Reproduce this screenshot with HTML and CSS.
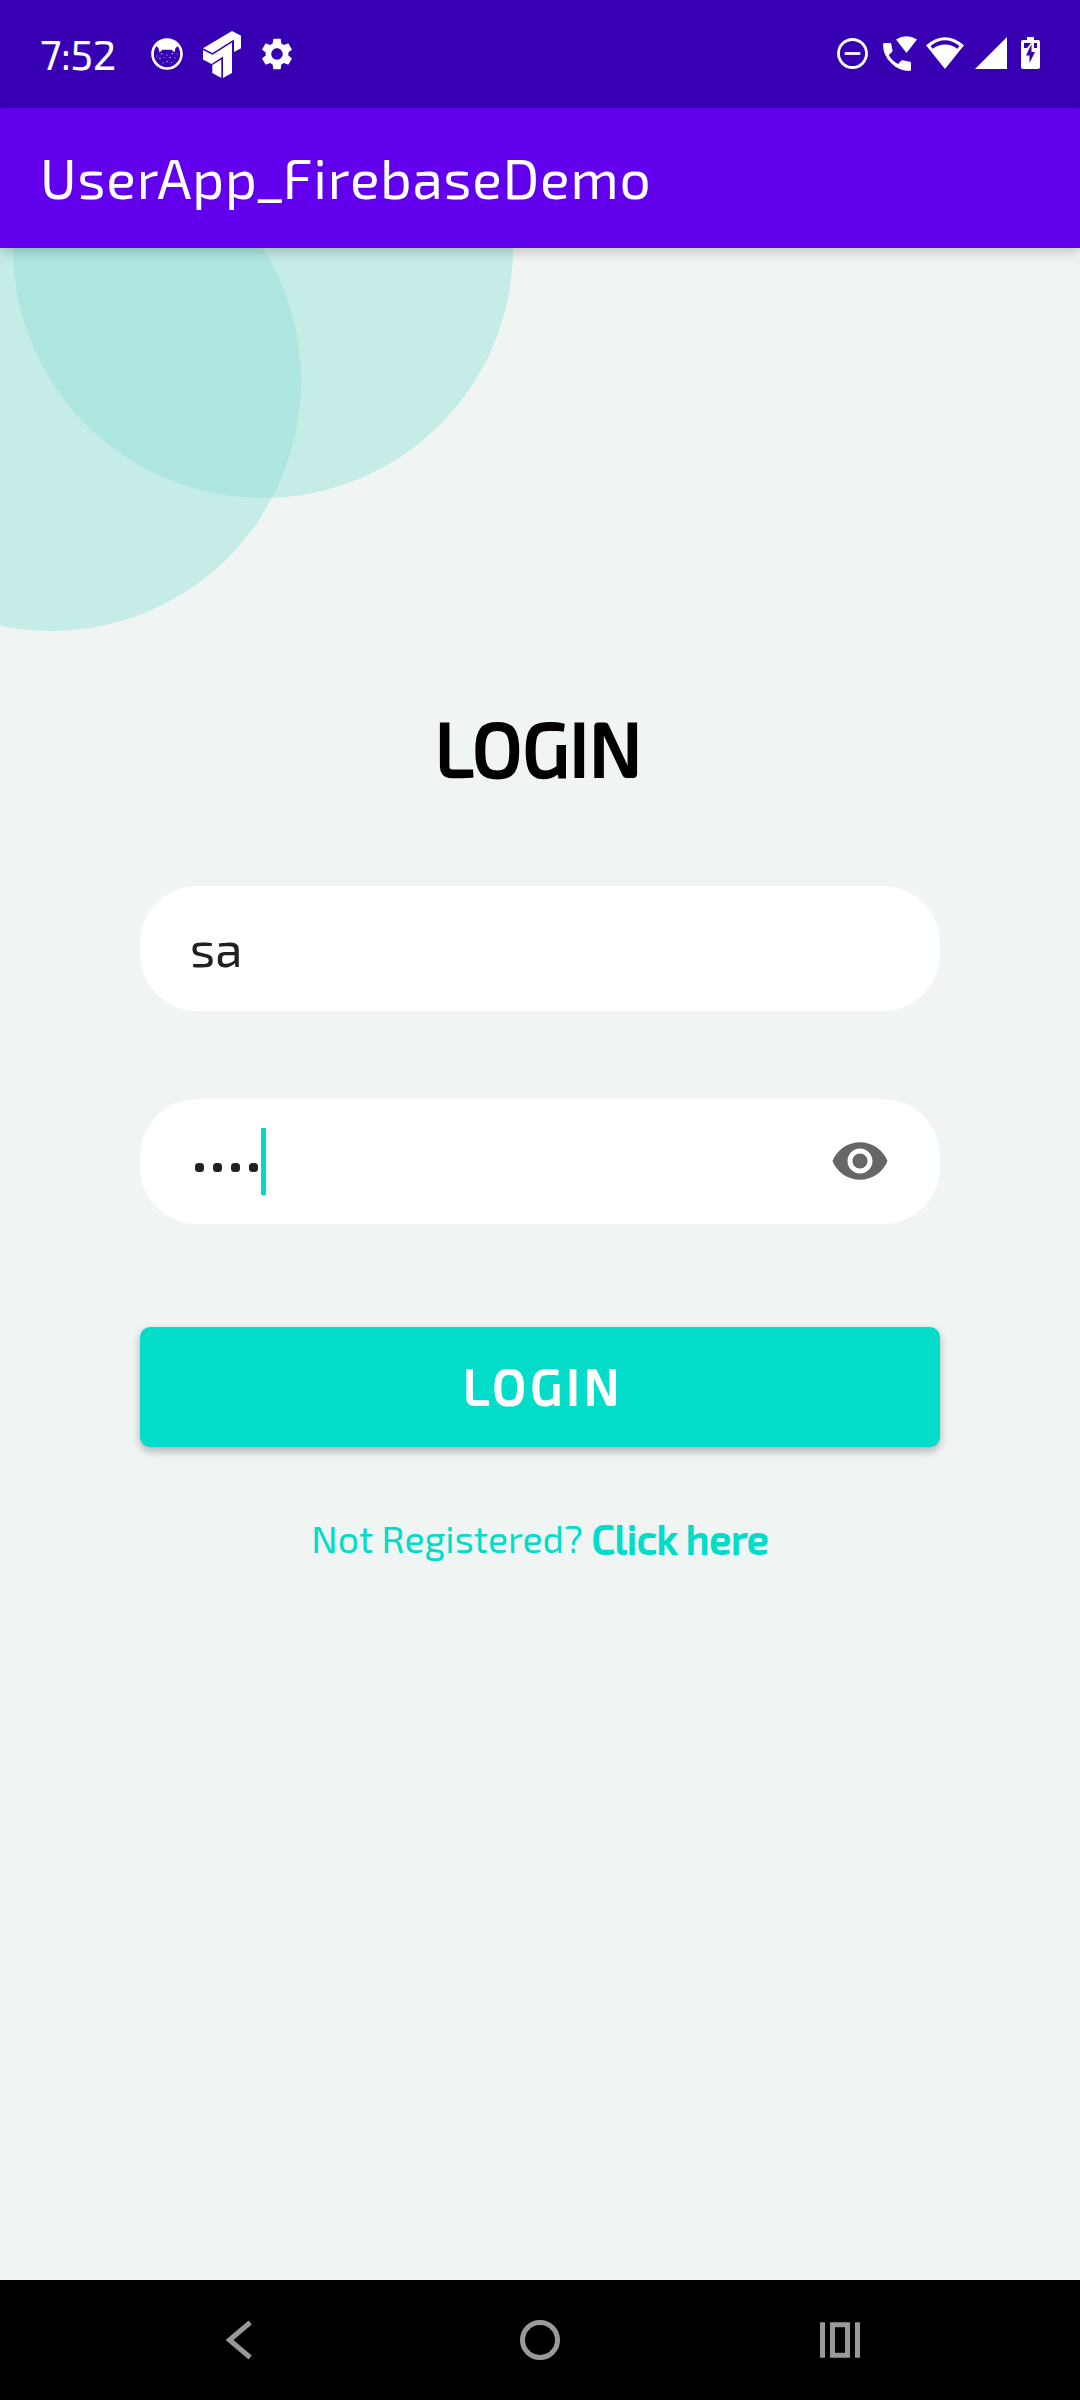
FILE: index.html
```html
<!DOCTYPE html>
<html lang="en">
<head>
<meta charset="utf-8">
<title>UserApp_FirebaseDemo</title>
<link rel="stylesheet" href="styles.css">
</head>
<body>
<div class="screen">
  <header class="status-bar">
    <div class="status-left">
      <span class="clock">7:52</span>
      <svg class="icon-cat" viewBox="0 0 32 32" width="32" height="32">
        <circle cx="16" cy="16" r="14.500" fill="none" stroke="#fff" stroke-width="2.600"/>
        <path fill="#fff" d="M5.500 8.500Q8 2 16 2T26.500 8.500L24.500 10 23.500 14.200 20.500 11.700H11.500L8.500 14.200 7.500 10Z"/>
        <g fill="#fff" fill-opacity=".75"><circle cx="10.500" cy="16" r=".7"/><circle cx="21.500" cy="15.500" r=".8"/><circle cx="16" cy="17" r=".6"/><circle cx="6" cy="18" r=".6"/><circle cx="9" cy="20.500" r=".8"/><circle cx="13" cy="19.500" r=".6"/><circle cx="19" cy="19.500" r=".8"/><circle cx="24" cy="20" r=".6"/><circle cx="12" cy="25" r=".6"/><circle cx="16" cy="23.500" r=".7"/><circle cx="20.500" cy="24.500" r=".6"/><circle cx="26" cy="16" r=".5"/></g>
      </svg>
      <svg class="icon-t" viewBox="203 31 38 47" width="38" height="47" fill="#fff">
        <path d="M232 31 241 35.700V48.300L234 52V39.500L212.500 53 203 48.300Z"/>
        <path d="M203 50 212.500 54.700 232 42.500V73L223 78V56.500L211.500 64 203 59.500Z"/>
        <path d="M212.300 65 221.300 59.500V78L212.300 73Z"/>
      </svg>
      <svg class="icon-gear" viewBox="0 0 24 24" width="38" height="38" fill="#fff">
        <path d="M19.140 12.940c.04-.3.06-.61.06-.94 0-.32-.02-.64-.07-.94l2.030-1.580c.18-.14.23-.41.12-.61l-1.920-3.320c-.12-.22-.37-.29-.59-.22l-2.390.96c-.5-.38-1.030-.7-1.620-.94l-.36-2.540c-.04-.24-.24-.41-.48-.41h-3.840c-.24 0-.43.17-.47.41l-.36 2.540c-.59.24-1.130.57-1.620.94l-2.390-.96c-.22-.08-.47 0-.59.22L2.740 8.870c-.12.21-.08.47.12.61l2.030 1.580c-.05.3-.09.63-.09.94s.02.64.07.94l-2.030 1.580c-.18.14-.23.41-.12.61l1.920 3.320c.12.22.37.29.59.22l2.390-.96c.5.38 1.030.7 1.620.94l.36 2.540c.05.24.24.41.48.41h3.840c.24 0 .44-.17.47-.41l.36-2.540c.59-.24 1.130-.56 1.620-.94l2.390.96c.22.08.47 0 .59-.22l1.920-3.320c.12-.22.07-.47-.12-.61l-2.010-1.580zM12 15.600c-1.980 0-3.600-1.620-3.600-3.600s1.620-3.600 3.600-3.600 3.600 1.620 3.600 3.600-1.620 3.600-3.600 3.600z"/>
      </svg>
    </div>
    <div class="status-right">
      <svg class="icon-dnd" viewBox="837 38 32 32" width="32" height="32" fill="none" stroke="#fff" stroke-width="2.800">
        <circle cx="852.500" cy="53.500" r="14"/><path d="M844.700 53.500H860.300"/>
      </svg>
      <svg class="icon-call" viewBox="882 36 36 36" width="36" height="36" fill="#fff">
        <path d="M896 39.500Q906.500 33 917 39.500L906.500 53Z"/>
        <path d="M884.500 43H890Q891.400 43 891.500 44.500 891.600 47.500 892.500 50 892.800 51.300 892 52L888.800 55Q892 61 898 64L901.200 60.700Q902 60 903.200 60.300 906 61.300 909.300 61.400 911 61.600 911 63V69.500Q911 71 909.500 71 899 71 891 63 883 55 883 44.500 883 43 884.500 43Z"/>
      </svg>
      <svg class="icon-wifi" viewBox="926 37 38 32" width="38" height="32">
        <path fill="#fff" fill-rule="evenodd" d="M926 45.300Q945 29 964 45.300L945 69ZM930.500 46 932.700 48.700Q945 40.500 957.300 48.700L959.500 46Q945 34.500 930.500 46Z"/>
      </svg>
      <svg class="icon-signal" viewBox="0 0 32 32" width="32" height="32"><path fill="#fff" d="M32 0V32H0Z"/></svg>
      <svg class="icon-battery" viewBox="0 0 19 32" width="19" height="32">
        <path fill="#fff" d="M6 0H13V3H17Q19 3 19 5V30Q19 32 17 32H2Q0 32 0 30V5Q0 3 2 3H6Z"/>
        <path fill="#3700b3" d="M3 6H10L6 11H3ZM13 6H16V11H13ZM10.500 7 5 18.500H8.500V26L14 15H10.500Z"/>
      </svg>
    </div>
  </header>

  <div class="app-bar"><h1 class="app-title">UserApp_FirebaseDemo</h1></div>

  <main class="content">
    <svg class="bubbles" viewBox="0 0 520 390" width="520" height="390" fill="#8ee1d7" fill-opacity=".43">
      <circle cx="263" cy="0" r="250"/><circle cx="51" cy="133" r="250"/>
    </svg>
    <h2 class="heading">LOGIN</h2>
    <form class="form">
      <div class="field"><span class="field-text">sa</span></div>
      <div class="field field-password">
        <span class="dots"><i class="dot"></i><i class="dot"></i><i class="dot"></i><i class="dot"></i></span>
        <span class="caret"></span>
        <svg class="icon-eye" viewBox="0 0 24 24" width="60" height="60" fill="#666">
          <path d="M12 4.500C7 4.500 2.730 7.610 1 12c1.730 4.390 6 7.500 11 7.500s9.270-3.110 11-7.500c-1.730-4.390-6-7.500-11-7.500zM12 17c-2.760 0-5-2.240-5-5s2.240-5 5-5 5 2.240 5 5-2.240 5-5 5zm0-8c-1.660 0-3 1.340-3 3s1.340 3 3 3 3-1.340 3-3-1.340-3-3-3z"/>
        </svg>
      </div>
      <button class="login-button" type="button">LOGIN</button>
    </form>
    <p class="register"><span class="question">Not Registered?</span><a class="register-link">Click here</a></p>
  </main>

  <nav class="nav-bar">
    <div class="nav-item"><svg viewBox="0 0 60 60" width="60" height="60" fill="none" stroke="#999" stroke-width="5"><path d="M40.200 12.500 19.500 30 40.200 47.500"/></svg></div>
    <div class="nav-item"><svg viewBox="0 0 60 60" width="60" height="60" fill="none" stroke="#999" stroke-width="5"><circle cx="30" cy="30" r="17.500"/></svg></div>
    <div class="nav-item"><svg viewBox="0 0 60 60" width="60" height="60" fill="#999"><path fill-rule="evenodd" d="M10 12.300H15V47.700H10ZM20 12.300H40V47.700H20ZM25 17.300V42.700H35V17.300ZM45 12.300H50V47.700H45Z"/></svg></div>
  </nav>
</div>
</body>
</html>
```
FILE: styles.css
```css
* { box-sizing: border-box; }
body { margin: 0; font-family: "Exo 2", Roboto, "Noto Sans", sans-serif; }
h1, h2, p { margin: 0; font-weight: 400; }
svg { display: block; flex: none; }

.screen {
  width: 1080px;
  height: 2400px;
  display: flex;
  flex-direction: column;
  background: #f0f4f3;
  overflow: hidden;
}

.status-bar {
  height: 108px;
  flex: none;
  display: flex;
  justify-content: space-between;
  padding: 0 40px;
  background: #3700b3;
  color: #fff;
}
.status-left, .status-right { display: flex; align-items: center; height: 108px; }
.clock { width: 111px; font-size: 42px; line-height: 48px; letter-spacing: -0.4px; padding-bottom: 3px; }
.icon-t { margin-left: 20px; }
.icon-gear { margin-left: 17px; }
.status-right { align-items: flex-start; padding-top: 37px; }
.icon-dnd { margin-top: 1px; }
.icon-call { margin: -1px 0 0 13px; }
.icon-wifi { margin-left: 8px; }
.icon-signal { margin-left: 11px; }
.icon-battery { margin-left: 14px; }

.app-bar {
  position: relative;
  z-index: 1;
  height: 140px;
  flex: none;
  display: flex;
  align-items: center;
  padding: 0 40px 3px;
  background: #6200ee;
  color: #fff;
  box-shadow: 0 4px 12px rgba(0, 0, 0, .2);
}
.app-title { font-size: 55px; line-height: 64px; letter-spacing: .85px; white-space: nowrap; }

.content { position: relative; flex: 1; display: flex; flex-direction: column; align-items: center; }
.bubbles { position: absolute; left: 0; top: 0; }

.heading {
  margin-top: 454px;
  padding-right: 3px;
  font-size: 75px;
  line-height: 90px;
  color: #000;
  -webkit-text-stroke: 3px currentColor;
}

.form { width: 800px; margin-top: 94px; display: flex; flex-direction: column; }
.field {
  height: 125px;
  display: flex;
  align-items: center;
  padding: 0 50px;
  border-radius: 57px;
  background: #fff;
  color: #212121;
}
.field-text { font-size: 49.5px; line-height: 56px; padding-bottom: 1px; }
.field-password { margin-top: 88px; }
.dots { display: flex; gap: 9px; padding: 12px 0 0 4.5px; }
.dot { width: 9px; height: 9px; border-radius: 3.5px; background: #212121; }
.caret { width: 5px; height: 67px; margin-left: 3.5px; background: #03dac5; }
.icon-eye { margin: 0 0 1px auto; }

.login-button {
  height: 120px;
  margin-top: 103px;
  padding: 0 0 4px 7px;
  border: 0;
  border-radius: 10px;
  background: #03dcc8;
  box-shadow: 0 4px 8px rgba(0, 0, 0, .28);
  color: #fff;
  font: inherit;
  font-size: 50px;
  letter-spacing: 4.5px;
  -webkit-text-stroke: 2.2px currentColor;
}

.register { margin-top: 64px; display: flex; align-items: baseline; gap: 9px; color: #03dcc8; }
.question { font-size: 37.4px; line-height: 52px; }
.register-link { font-size: 40px; line-height: 52px; letter-spacing: .2px; position: relative; top: 1px; -webkit-text-stroke: 1.9px currentColor; }

.nav-bar {
  height: 120px;
  flex: none;
  display: flex;
  align-items: center;
  justify-content: center;
  gap: 240px;
  background: #000;
}
```
